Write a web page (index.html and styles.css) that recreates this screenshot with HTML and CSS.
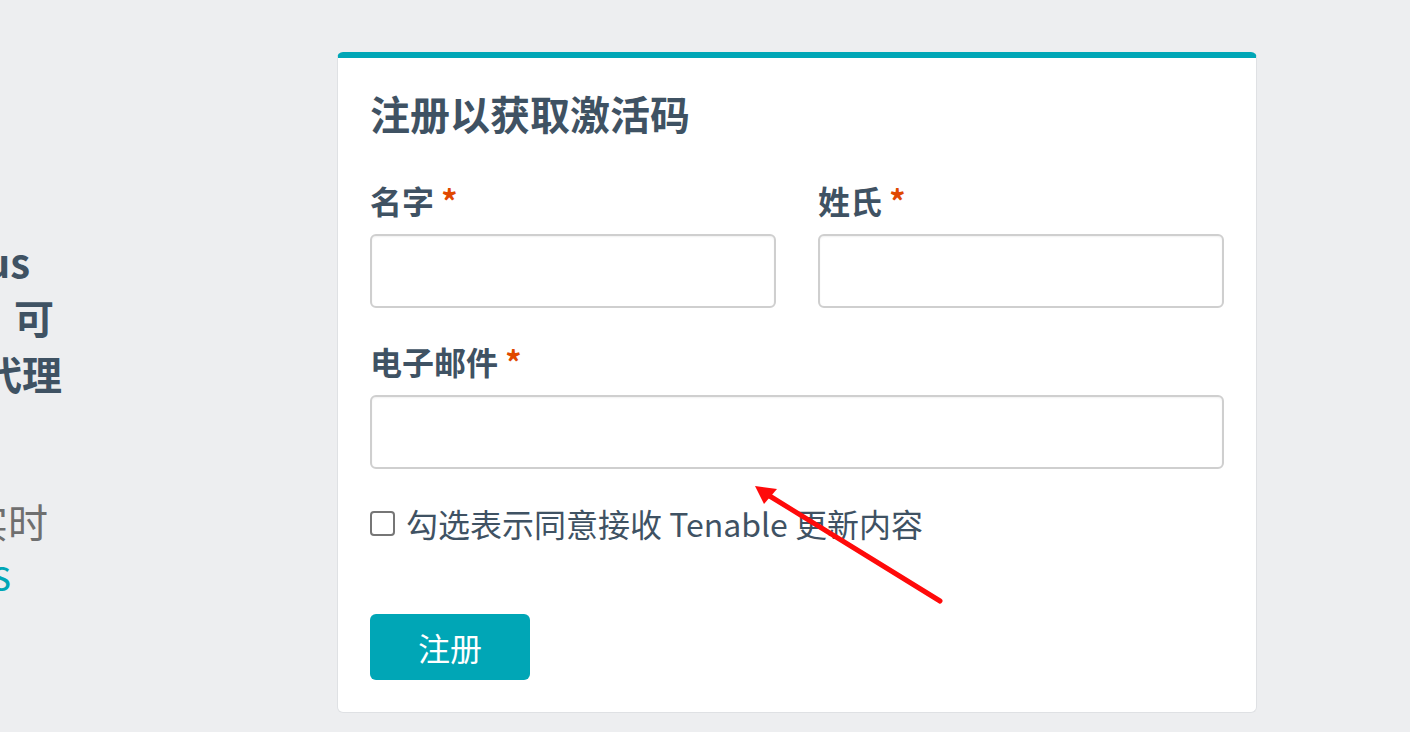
FILE: index.html
```html
<!DOCTYPE html>
<html lang="zh-CN">
<head>
<meta charset="utf-8">
<title>注册以获取激活码</title>
<link rel="stylesheet" href="styles.css">
</head>
<body>
<div class="page">
  <aside class="intro">
    <div class="line head w30"><span>Tenable Nessus</span></div>
    <div class="line head w54"><span>Nessus Essentials<span class="gap">可</span></span></div>
    <div class="line head w62"><span>免费扫描程序代理</span></div>
    <div class="line body w48 first"><span>将为您提供实时</span></div>
    <div class="line link w11"><span>Tenable Nessus</span></div>
  </aside>

  <form class="card">
    <h1 class="title">注册以获取激活码</h1>
    <div class="row">
      <label class="field">
        <span class="label">名字 <span class="req">*</span></span>
        <input class="input" type="text">
      </label>
      <label class="field">
        <span class="label">姓氏 <span class="req">*</span></span>
        <input class="input" type="text">
      </label>
    </div>
    <label class="field email">
      <span class="label">电子邮件 <span class="req">*</span></span>
      <input class="input" type="email">
    </label>
    <label class="check">
      <span class="box"></span>
      <span class="check-text">勾选表示同意接收 Tenable 更新内容</span>
    </label>
    <button class="submit" type="button">注册</button>
  </form>
</div>

<svg class="arrow" width="1410" height="732" viewBox="0 0 1410 732" aria-hidden="true">
  <line x1="940" y1="601" x2="768" y2="495" stroke="#ff0a0a" stroke-width="5" stroke-linecap="round"/>
  <polygon points="755,486 777,489 764,504" fill="#ff0a0a"/>
</svg>
</body>
</html>
```

FILE: styles.css
```css
* { box-sizing: border-box; }

html, body {
  margin: 0;
  height: 100%;
}

body {
  background: #edeef0;
  font-family: "Noto Sans CJK SC", "Noto Sans", sans-serif;
  color: #3f5263;
  overflow: hidden;
}

.page {
  display: flex;
  align-items: flex-start;
  padding-top: 52px;
}

.intro {
  width: 337px;
  flex: none;
  padding-top: 181px;
}

.line {
  display: flex;
  justify-content: flex-end;
  overflow: hidden;
  white-space: nowrap;
  font-size: 40px;
}

.line.head {
  font-weight: 700;
  line-height: 56px;
}

.line.body {
  font-weight: 400;
  line-height: 52px;
  color: #6f6f6f;
}

.line.first { margin-top: 94px; }

.line.link {
  line-height: 52px;
  color: #00a6b6;
}

.gap { margin-left: 20px; }

.w30 { width: 30px; }
.w54 { width: 54px; }
.w62 { width: 62px; }
.w48 { width: 48px; }
.w11 { width: 11px; }

.card {
  width: 920px;
  flex: none;
  background: #fff;
  border: 1px solid #dfe1e4;
  border-top: 6px solid #00a6b6;
  border-radius: 6px;
  padding: 31px 32px 32px;
  display: flex;
  flex-direction: column;
}

.title {
  margin: 0 0 44px;
  font-size: 40px;
  line-height: 48px;
  font-weight: 700;
}

.row {
  display: grid;
  grid-template-columns: 1fr 1fr;
  column-gap: 42px;
}

.field {
  display: flex;
  flex-direction: column;
}

.label {
  font-size: 32px;
  line-height: 38px;
  font-weight: 700;
  margin-bottom: 15px;
}

.req {
  color: #e04800;
}

.input {
  height: 74px;
  border: 2px solid #cfcfcf;
  border-radius: 6px;
  background: #fff;
  box-shadow: inset 0 1px 2px rgba(0,0,0,0.06);
  font: inherit;
  outline: none;
}

.email { margin-top: 34px; }

.check {
  display: flex;
  align-items: center;
  gap: 11px;
  margin-top: 35px;
  font-size: 32px;
  line-height: 38px;
}

.box {
  width: 25px;
  height: 25px;
  border: 2px solid #767676;
  border-radius: 4px;
  background: #fff;
  flex: none;
}

.submit {
  align-self: flex-start;
  margin-top: 72px;
  width: 160px;
  height: 66px;
  border: none;
  border-radius: 6px;
  background: #00a6b6;
  color: #fff;
  font-family: inherit;
  font-size: 32px;
  line-height: 40px;
  font-weight: 400;
}

.arrow {
  position: absolute;
  left: 0;
  top: 0;
  pointer-events: none;
}
```
